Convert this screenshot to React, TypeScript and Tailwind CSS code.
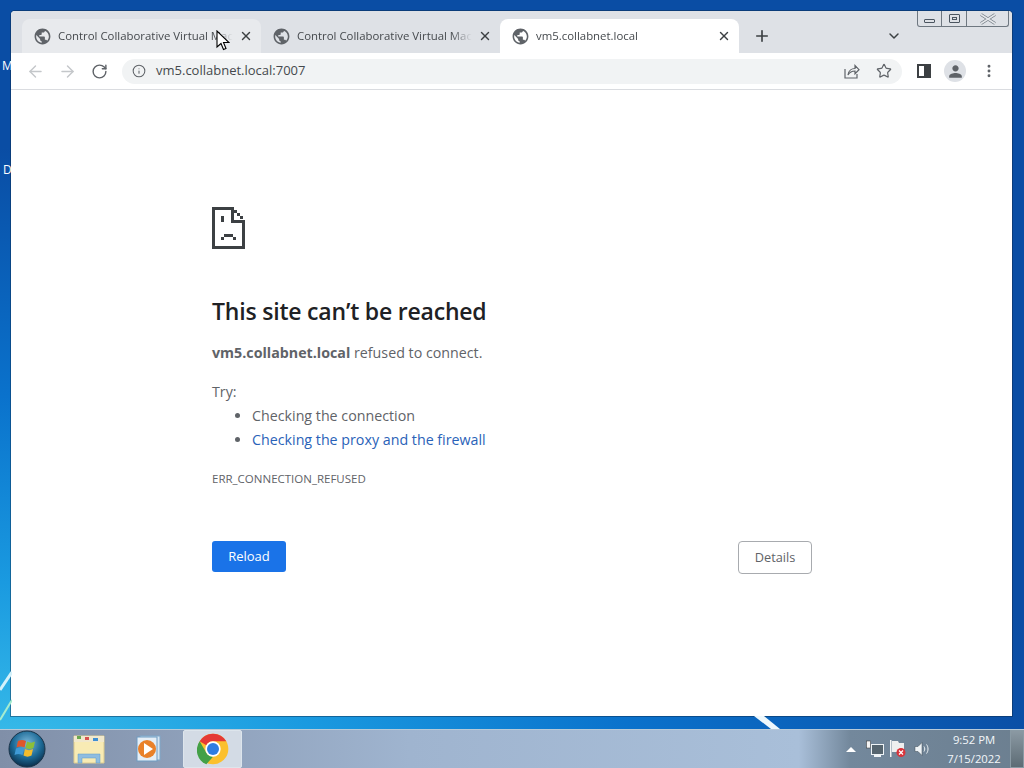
import React from "react";
import { ArrowLeft, ArrowRight, ChevronDown, EllipsisVertical, Info, Plus, RotateCw, Star, X } from "lucide-react";
import { MdPerson, MdPublic } from "react-icons/md";

const tabs = [
  { title: "Control Collaborative Virtual Machines", className: "bg-[#e8eaed]" },
  { title: "Control Collaborative Virtual Machines", className: "bg-[#dee1e6]" },
  { title: "vm5.collabnet.local", className: "bg-white" },
];

const SadPage = () => (
  <svg width="33" height="42" viewBox="0 0 33 42" fill="#3c4043" shapeRendering="crispEdges">
    <rect x="0" y="0" width="3" height="42" />
    <rect x="0" y="0" width="21" height="3" />
    <rect x="0" y="39" width="33" height="3" />
    <rect x="30" y="13" width="3" height="29" />
    <rect x="19" y="0" width="3" height="16" />
    <rect x="19" y="13" width="14" height="3" />
    <rect x="22" y="3" width="3" height="3" />
    <rect x="25" y="6" width="3" height="3" />
    <rect x="28" y="9" width="3" height="3" />
    <rect x="9" y="9" width="3" height="6" />
    <rect x="12" y="27" width="9" height="3" />
    <rect x="9" y="30" width="3" height="3" />
    <rect x="21" y="30" width="3" height="3" />
  </svg>
);

const ShareIcon = () => (
  <svg width="16" height="16" viewBox="0 0 16 16" fill="none" stroke="#5f6368" strokeWidth="1.2">
    <path d="M1 6v9h12v-4" />
    <path d="M4 12c.5-4 3.5-6.5 7-6.5V2.5l4 4.2-4 4V8C8 8 5.500 9.500 4 12z" />
  </svg>
);

const ChromeLogo = () => (
  <svg width="32" height="32" viewBox="0 0 48 48">
    <circle cx="24" cy="24" r="23" fill="#fbc02d" />
    <path d="M24 1a23 23 0 0 1 20 11.500H24a11.500 11.500 0 0 0-10 5.800L4 12.500A23 23 0 0 1 24 1z" fill="#e53935" />
    <path d="M4 12.500l10 17.300a11.500 11.500 0 0 0 10 5.700L14 47A23 23 0 0 1 4 12.500z" fill="#43a047" />
    <circle cx="24" cy="24" r="11.500" fill="#fff" />
    <circle cx="24" cy="24" r="9" fill="#2f7de1" />
  </svg>
);

const StartOrb = () => (
  <svg width="38" height="38" viewBox="0 0 38 38">
    <defs>
      <radialGradient id="orb" cx="50%" cy="35%" r="65%">
        <stop offset="0%" stopColor="#7db9dc" />
        <stop offset="60%" stopColor="#1c6a96" />
        <stop offset="100%" stopColor="#0b2f4c" />
      </radialGradient>
    </defs>
    <circle cx="19" cy="19" r="18" fill="url(#orb)" stroke="#1a3348" />
    <path d="M10 11c3-1.500 5-1.500 8 0l-1.500 6.500c-3-1.500-5-1.500-8 0z" fill="#e0562b" />
    <path d="M19 11.500c3 1.500 5 1.500 8 0l-1.500 6.500c-3 1.500-5 1.500-8 0z" fill="#8bbf3a" />
    <path d="M8 18.500c3-1.500 5-1.500 8 0l-1.500 6.500c-3-1.500-5-1.500-8 0z" fill="#3f9ad6" />
    <path d="M17 19c3 1.500 5 1.500 8 0l-1.500 6.500c-3 1.500-5 1.500-8 0z" fill="#f3bc2c" />
  </svg>
);

const FolderIcon = () => (
  <svg width="32" height="30" viewBox="0 0 32 30">
    <path d="M1 2h30v27H1z" fill="#f8ebb4" stroke="#dccb8e" />
    <path d="M1 2h30v6H1z" fill="#f1e8cc" />
    <rect x="4" y="2" width="4" height="3" fill="#6aa84f" />
    <rect x="12" y="3" width="4" height="3" fill="#d9534f" />
    <rect x="20" y="4" width="5" height="3" fill="#3f8fd2" />
    <path d="M5 29v-9h22v9h-4v-5H9v5z" fill="#8fbde0" stroke="#5c98ca" strokeWidth="0.5" />
  </svg>
);

const MediaIcon = () => (
  <svg width="30" height="30" viewBox="0 0 30 30">
    <rect x="6" y="2" width="20" height="24" fill="#d5e5f3" stroke="#7fa7c9" />
    <rect x="3" y="3" width="20" height="24" fill="#e5eef6" stroke="#6f9cc2" />
    <circle cx="13" cy="15" r="9" fill="#e9812a" />
    <path d="M10 9l9 6-9 6z" fill="#fff" />
  </svg>
);

const TrayNetwork = () => (
  <svg width="18" height="18" viewBox="0 0 18 18">
    <rect x="5.500" y="4.500" width="12" height="10" fill="#56656f" stroke="#eef3f6" />
    <rect x="8" y="15" width="7" height="2" fill="#eef3f6" />
    <rect x="0.500" y="1" width="4" height="7" fill="#f4f4f4" stroke="#333" strokeWidth="0.5" />
  </svg>
);

const TrayFlag = () => (
  <svg width="18" height="18" viewBox="0 0 18 18">
    <rect x="1" y="0" width="1.500" height="17" fill="#f6f6f6" />
    <path d="M3 1h6l1 2h5v9H3z" fill="#efefef" />
    <circle cx="12" cy="12.500" r="4.500" fill="#d8333a" />
    <path d="M10 10.500l4 4m0-4l-4 4" stroke="#fff" strokeWidth="1.200" />
  </svg>
);

const TraySpeaker = () => (
  <svg width="16" height="16" viewBox="0 0 16 16" fill="none">
    <path d="M1 5.500h3l4-4v13l-4-4H1z" fill="#eef3f6" stroke="#3c4a55" strokeWidth="0.5" />
    <path d="M10 5.500c1 1.500 1 3.500 0 5M12.500 3.500c2 2.500 2 6.500 0 9" stroke="#eef3f6" />
  </svg>
);

const CloseGlyph = () => (
  <svg width="20" height="12" viewBox="0 0 20 12" fill="none">
    <path d="M3 1.500L17 10.500M17 1.500L3 10.500" stroke="#6e7780" strokeWidth="3" />
    <path d="M3 1.500L17 10.500M17 1.500L3 10.500" stroke="#e6e8eb" strokeWidth="1.500" />
  </svg>
);

const Cursor = () => (
  <svg width="14" height="21" viewBox="0 0 14 21">
    <path d="M1 1v16l4-3.500 2.500 6 2.500-1-2.500-6H13z" fill="#fff" stroke="#000" strokeWidth="1.100" />
  </svg>
);

export default function App() {
  return (
    <div className="relative flex h-[768px] w-[1024px] flex-col overflow-hidden bg-[radial-gradient(ellipse_1050px_620px_at_0%_100%,#3cc0ea_0%,#1a9ae0_30%,#0a72cc_60%,#0a4da4_100%)] font-['Open_Sans',sans-serif]">
      {/* desktop labels and wallpaper streaks around the window */}
      <span className="absolute left-[2px] top-[58px] text-xs text-white">M</span>
      <span className="absolute left-[3px] top-[162px] text-xs text-white">D</span>
      <svg className="absolute left-0 top-[660px]" width="12" height="62" viewBox="0 0 12 62" fill="none">
        <path d="M0 30L12 12" stroke="#d4f2fb" strokeWidth="3" />
        <path d="M0 60L12 40" stroke="#a6ecd0" strokeWidth="2" />
      </svg>
      <svg className="absolute left-[750px] top-[716px]" width="34" height="14" viewBox="0 0 34 14">
        <path d="M4 0h10l16 13h-9z" fill="#eef8fc" />
      </svg>

      <main className="mx-[11px] mt-[11px] flex h-[705px] w-[1001px] shrink-0 flex-col overflow-hidden rounded-t-[4px] bg-white shadow-[0_0_0_1px_rgba(10,40,70,0.45)]">
        {/* tab strip */}
        <div className="relative flex h-[42px] shrink-0 items-end bg-[#dee1e6] pl-[11px]">
          {tabs.map((tab, i) => (
            <div
              key={i}
              className={`flex h-[34px] w-[239px] items-center rounded-t-lg pl-[11px] pr-[8px] ${tab.className}`}
            >
              <MdPublic size={19} className="shrink-0 text-[#5f6368]" />
              <span className="ml-[6px] flex-1 overflow-hidden whitespace-nowrap text-[11.4px] text-[#45494d] [mask-image:linear-gradient(to_right,black_88%,transparent)]">
                {tab.title}
              </span>
              <X size={14} strokeWidth={2.4} className="ml-[6px] shrink-0 text-[#3c4043]" />
            </div>
          ))}
          <div className="ml-[14px] flex h-[34px] items-center">
            <Plus size={18} strokeWidth={2.2} className="text-[#3c4043]" />
          </div>
          <div className="ml-auto mr-[110px] flex h-[34px] items-center">
            <ChevronDown size={16} strokeWidth={2.2} className="text-[#3c4043]" />
          </div>
          {/* classic window buttons */}
          <div className="absolute right-[3px] top-0 flex h-[16px] w-[92px] rounded-b-[3px] border border-t-0 border-[#6e7780]">
            <div className="flex w-[24px] items-center justify-center border-r border-[#6e7780]">
              <div className="mt-[5px] h-[4px] w-[11px] rounded-[1px] border border-[#4b5560]" />
            </div>
            <div className="flex w-[25px] items-center justify-center border-r border-[#6e7780]">
              <div className="flex h-[9px] w-[11px] items-center justify-center rounded-[1px] border border-[#4b5560]">
                <div className="h-[3px] w-[5px] border border-[#4b5560]" />
              </div>
            </div>
            <div className="flex flex-1 items-center justify-center">
              <CloseGlyph />
            </div>
          </div>
        </div>

        {/* toolbar */}
        <div className="flex h-[37px] shrink-0 items-center border-b border-[#dadce0] bg-white pl-[15px] pr-[15px]">
          <ArrowLeft size={19} strokeWidth={1.8} className="text-[#c4c7ca]" />
          <ArrowRight size={19} strokeWidth={1.8} className="ml-[13px] text-[#c4c7ca]" />
          <RotateCw size={17} strokeWidth={2} className="ml-[14px] text-[#5f6368]" />
          <div className="ml-[14px] flex h-[25px] w-[780px] items-center rounded-full bg-[#f1f3f4] pl-[10px] pr-[10px]">
            <Info size={14} strokeWidth={1.8} className="text-[#5f6368]" />
            <span className="ml-[10px] text-[13px] text-[#45494d]">vm5.collabnet.local:7007</span>
            <div className="ml-auto flex items-center gap-[16px]">
              <ShareIcon />
              <Star size={16} strokeWidth={1.8} className="text-[#5f6368]" />
            </div>
          </div>
          <div className="ml-[15px] flex h-[14px] w-[14px] justify-end border-2 border-[#3c4043]">
            <div className="h-full w-[5px] bg-[#3c4043]" />
          </div>
          <div className="ml-[13px] flex h-[22px] w-[22px] items-center justify-center rounded-full bg-[#dee1e6]">
            <MdPerson size={19} className="text-[#5f6368]" />
          </div>
          <EllipsisVertical size={16} strokeWidth={2.4} className="ml-[15px] text-[#5f6368]" />
        </div>

        {/* error page */}
        <div className="flex min-h-0 flex-1 flex-col pl-[201px] pr-[200px] pt-[117px]">
          <SadPage />
          <h1 className="mt-[44px] text-[23px] font-semibold leading-[36px] tracking-[-0.2px] text-[#202124]">
            This site can’t be reached
          </h1>
          <p className="mt-[12px] text-[14.25px] leading-[24px] text-[#5f6368]">
            <b className="font-bold">vm5.collabnet.local</b> refused to connect.
          </p>
          <p className="mt-[15px] text-[14.25px] leading-[24px] text-[#5f6368]">Try:</p>
          <ul className="list-disc pl-[40px] text-[14.25px] leading-[24px] text-[#5f6368]">
            <li>Checking the connection</li>
            <li>
              <span className="text-[#2a62b8]">Checking the proxy and the firewall</span>
            </li>
          </ul>
          <p className="mt-[18px] text-[11.5px] leading-[18px] text-[#5f6368]">ERR_CONNECTION_REFUSED</p>
          <div className="mt-[53px] flex items-start justify-between">
            <button className="flex h-[31px] w-[74px] items-center justify-center rounded-[3px] bg-[#1a73e8] text-[13px] text-white">
              Reload
            </button>
            <button className="flex h-[33px] w-[74px] items-center justify-center rounded-[4px] border border-[#a8abaf] bg-white text-[12.75px] text-[#5f6368]">
              Details
            </button>
          </div>
        </div>
      </main>

      {/* taskbar */}
      <footer className="mt-auto flex h-[39px] shrink-0 items-center border-t border-[#b8cad8] bg-[linear-gradient(to_right,#808fa8_0%,#9fb4cf_40%,#a9bfd9_78%,#73889c_83%,#6c7f90_100%)]">
        <div className="ml-[8px] flex w-[38px] items-center justify-center">
          <StartOrb />
        </div>
        <div className="ml-[27px] flex w-[32px] items-center">
          <FolderIcon />
        </div>
        <div className="ml-[29px] flex w-[32px] items-center">
          <MediaIcon />
        </div>
        <div className="ml-[17px] flex h-[38px] w-[59px] items-center justify-center rounded-[2px] border border-[#dde5ec] bg-[#d3dbe5]">
          <ChromeLogo />
        </div>
        <div className="ml-auto flex items-center">
          <div className="h-0 w-0 border-x-[5px] border-b-[5px] border-x-transparent border-b-white" />
          <div className="ml-[10px] flex items-center">
            <TrayNetwork />
            <div className="ml-[5px]">
              <TrayFlag />
            </div>
            <div className="ml-[7px]">
              <TraySpeaker />
            </div>
          </div>
          <div className="ml-[14px] flex w-[60px] flex-col items-center text-[11.3px] leading-[19px] text-[#f2f6f9]">
            <span>9:52 PM</span>
            <span>7/15/2022</span>
          </div>
          <div className="ml-[6px] h-[38px] w-[14px] border border-[#8a9aa4] bg-gradient-to-b from-[#8b99a3] to-[#5d6c75]" />
        </div>
      </footer>

      <div className="absolute left-[216px] top-[30px]">
        <Cursor />
      </div>
    </div>
  );
}
